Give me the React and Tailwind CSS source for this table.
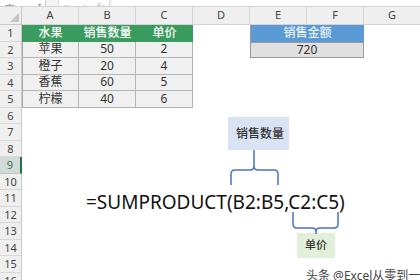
import React from "react";

const COLS = ["A", "B", "C", "D", "E", "F", "G"];
const TABLE = [
  ["水果", "销售数量", "单价"],
  ["苹果", "50", "2"],
  ["橙子", "20", "4"],
  ["香蕉", "60", "5"],
  ["柠檬", "40", "6"],
];
const ROWS = Array.from({ length: 16 }, (_, i) => i + 1);

const cjk = { fontFamily: '"Noto Sans", "Noto Sans CJK SC", sans-serif' };

function FormulaBar() {
  return (
    <div className="flex h-[7px] overflow-hidden border-b border-[#d4d4d4] bg-[#f3f3f3]">
      <div className="flex w-[46px] items-end justify-between border-r border-[#d0d0d0] bg-white px-1">
        <span className="-mb-[8px] text-[11px] leading-none text-[#666]">序</span>
        <span className="-mb-[2px] text-[6px] leading-none text-[#999]">▾</span>
      </div>
      <div className="w-[12px]" />
      <div className="flex w-[52px] items-end justify-around border-x border-[#d8d8d8] bg-white">
        <span className="-mb-[6px] text-[10px] leading-none text-[#bbb]">×</span>
        <span className="-mb-[6px] text-[10px] leading-none text-[#bbb]">✓</span>
        <span className="-mb-[6px] text-[10px] italic leading-none text-[#bbb]">fx</span>
      </div>
      <div className="ml-[2px] flex-1 bg-white" />
    </div>
  );
}

function ColumnHeader() {
  return (
    <div className="flex h-[18px] bg-[#efefef] text-[11px] text-[#444]" style={cjk}>
      <div className="relative w-[22px] shrink-0 border-b border-r border-[#c9c9c9]">
        <svg className="absolute bottom-[2px] right-[2px]" width="9" height="9">
          <path d="M9 0 L9 9 L0 9 Z" fill="#c4c4c4" />
        </svg>
      </div>
      {COLS.map((c) => (
        <div
          key={c}
          className="flex w-[57px] shrink-0 items-center justify-center border-b border-r border-[#d4d4d4]"
        >
          {c}
        </div>
      ))}
    </div>
  );
}

function RowHeader({ r }) {
  const sel = r === 9;
  return (
    <div
      className={`flex w-[22px] shrink-0 items-center justify-center border-b text-[11px] ${
        sel
          ? "border-b-[#bfc9c2] border-r-2 border-r-[#217346] bg-[#d2dad5] text-[#3d6e50]"
          : "border-b-[#d8d8d8] border-r border-r-[#c9c9c9] bg-[#efefef] text-[#444]"
      }`}
    >
      {r}
    </div>
  );
}

function Row({ r }) {
  const inTable = r <= 5;
  return (
    <div className="flex h-[16.5px] text-[12px] leading-none" style={cjk}>
      <RowHeader r={r} />
      {inTable
        ? TABLE[r - 1].map((v, i) => (
            <div
              key={i}
              className={`flex w-[57px] shrink-0 items-center justify-center ${
                r === 1
                  ? "bg-[#3a9b5e] font-medium text-white"
                  : "border-b border-r border-[#b5b5b5] bg-[#f0f0f0] text-[#333]"
              } ${i === 0 && r > 1 ? "border-l border-l-[#a8a8a8]" : ""}`}
            >
              {v}
            </div>
          ))
        : [0, 1, 2].map((i) => <div key={i} className="w-[57px] shrink-0" />)}
      <div className="w-[57px] shrink-0" />
      {r === 1 ? (
        <div className="flex w-[114px] shrink-0 items-center justify-center border-l border-[#9a9a9a] bg-[#5b9bd5] text-white">
          销售金额
        </div>
      ) : r === 2 ? (
        <div className="flex w-[114px] shrink-0 items-center justify-center border-x border-b border-t border-[#9a9a9a] bg-[#e0e0e0] text-[#333]">
          720
        </div>
      ) : (
        <div className="w-[114px] shrink-0" />
      )}
      <div className="w-[57px] shrink-0" />
    </div>
  );
}

export default function App() {
  return (
    <div className="relative h-[280px] w-[420px] overflow-hidden bg-white">
      <FormulaBar />
      <ColumnHeader />
      {ROWS.map((r) => (
        <Row key={r} r={r} />
      ))}

      <div
        className="absolute left-[86px] top-[193px] whitespace-nowrap text-[19px] leading-none text-[#111]"
        style={{ fontFamily: '"Noto Sans", sans-serif' }}
      >
        =SUMPRODUCT(B2:B5,C2:C5)
      </div>

      <div
        className="absolute left-[228px] top-[117px] flex h-[33px] w-[61px] items-center bg-[#dae3f3] pl-[8px] text-[12px] font-medium text-[#333]"
        style={cjk}
      >
        销售数量
      </div>

      <div
        className="absolute left-[297px] top-[233px] flex h-[25px] w-[38px] items-center justify-center bg-[#e2efda] text-[11px] font-medium text-[#333]"
        style={cjk}
      >
        单价
      </div>

      <svg className="pointer-events-none absolute left-0 top-0" width="420" height="280">
        <path
          d="M231 185 V174 Q231 170 235 170 H250 Q254 170 254 166 V150 M254 166 Q254 170 258 170 H274 Q278 170 278 174 V185"
          fill="none"
          stroke="#4a73c0"
          strokeWidth="1.5"
        />
        <path
          d="M293 212 V224 Q293 228 297 228 H312 Q316 228 316 232 V234 M316 232 Q316 228 320 228 H334 Q338 228 338 224 V212"
          fill="none"
          stroke="#4a73c0"
          strokeWidth="1.5"
        />
      </svg>

      <div
        className="absolute left-[306px] top-[270px] whitespace-nowrap text-[12px] leading-none text-[#444]"
        style={cjk}
      >
        头条 @Excel从零到一
      </div>
    </div>
  );
}
